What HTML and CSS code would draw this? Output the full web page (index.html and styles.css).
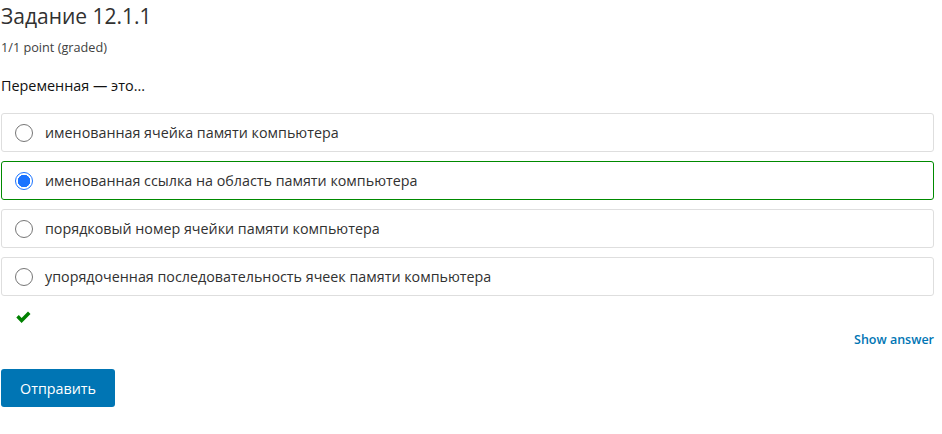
FILE: index.html
```html
<!DOCTYPE html>
<html lang="ru">
<head>
<meta charset="utf-8">
<link rel="stylesheet" href="styles.css">
</head>
<body>
<div class="problem">
  <h3 class="title">Задание 12.1.1</h3>
  <div class="points">1/1 point (graded)</div>
  <p class="question">Переменная — это...</p>
  <div class="options">
    <div class="option"><span class="radio"></span><span>именованная ячейка памяти компьютера</span></div>
    <div class="option option-correct"><span class="radio checked"></span><span>именованная ссылка на область памяти компьютера</span></div>
    <div class="option"><span class="radio"></span><span>порядковый номер ячейки памяти компьютера</span></div>
    <div class="option"><span class="radio"></span><span>упорядоченная последовательность ячеек памяти компьютера</span></div>
  </div>
  <div class="status">
    <svg width="17" height="13" viewBox="0 0 16 13"><path d="M0.8 6.6 L3.3 4.1 L6.1 6.9 L12.5 0.5 L15 3 L6.1 11.9 Z" fill="#008100"/></svg>
  </div>
  <div class="actions-right"><a class="show-answer">Show answer</a></div>
  <button class="submit">Отправить</button>
</div>
</body>
</html>
```

FILE: styles.css
```css
* { box-sizing: border-box; }
body {
  margin: 0;
  padding: 0 8px 0 1px;
  font-family: "Open Sans", "Liberation Sans", sans-serif;
  color: #313131;
  background: #fff;
}
.problem { display: flex; flex-direction: column; }
.title {
  margin: 2px 0 0 0;
  font-size: 21px;
  font-weight: 400;
  line-height: 28px;
  color: #313131;
}
.points {
  margin-top: 9px;
  font-size: 12.7px;
  line-height: 16px;
  color: #414141;
}
.question {
  margin: 21px 0 0 0;
  font-size: 14.4px;
  line-height: 20px;
  color: #111;
}
.options {
  margin-top: 17px;
  display: flex;
  flex-direction: column;
  gap: 9px;
}
.option {
  display: flex;
  align-items: center;
  height: 39px;
  border: 1px solid #dedede;
  border-radius: 3px;
  padding-left: 13px;
  font-size: 14.3px;
  color: #313131;
}
.option-correct { border-color: #008a00; }
.radio {
  width: 18px;
  height: 18px;
  border-radius: 50%;
  border: 1px solid #767676;
  margin-right: 12px;
  flex: none;
  background: #fff;
}
.radio.checked {
  border: 1.5px solid #1a73ff;
  background: radial-gradient(circle, #1a73ff 0 6px, #fff 6.5px);
}
.status {
  margin-top: 11px;
  padding-left: 14px;
  height: 14px;
}
.actions-right {
  display: flex;
  justify-content: flex-end;
  margin-top: 10px;
}
.show-answer {
  font-size: 12.5px;
  font-weight: 600;
  color: #0075b4;
  line-height: 18px;
}
.submit {
  align-self: flex-start;
  margin-top: 20px;
  width: 114px;
  height: 38px;
  background: #0075b4;
  color: #fff;
  border: none;
  border-radius: 3px;
  font-family: "Open Sans", "Liberation Sans", sans-serif;
  font-size: 14.3px;
}
```
